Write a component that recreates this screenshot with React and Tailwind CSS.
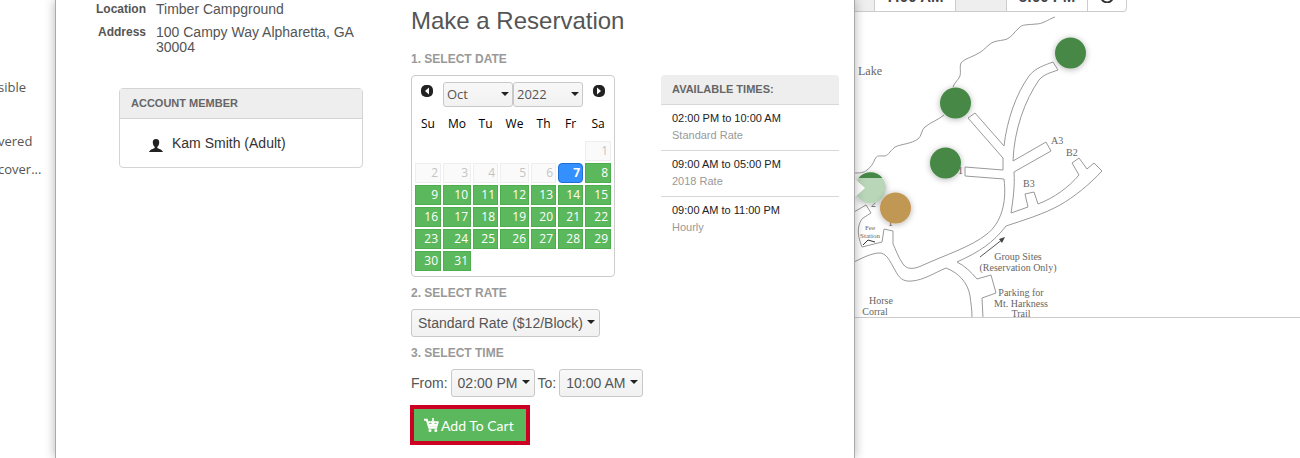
const weekdays = ['Su', 'Mo', 'Tu', 'We', 'Th', 'Fr', 'Sa'];
const weeks = [
  [null, null, null, null, null, null, 1],
  [2, 3, 4, 5, 6, 7, 8],
  [9, 10, 11, 12, 13, 14, 15],
  [16, 17, 18, 19, 20, 21, 22],
  [23, 24, 25, 26, 27, 28, 29],
  [30, 31, null, null, null, null, null],
];
const times = [
  ['02:00 PM to 10:00 AM', 'Standard Rate'],
  ['09:00 AM to 05:00 PM', '2018 Rate'],
  ['09:00 AM to 11:00 PM', 'Hourly'],
];

function Select({ id, label, value, className, arrow }) {
  return (
    <span className="relative inline-flex">
      <select
        id={id}
        aria-label={label}
        defaultValue={value}
        className={'appearance-none rounded-[3px] border border-[#c8c8c8] bg-linear-to-b from-[#f8f8f8] to-[#f1f1f1] text-[#555] ' + className}
      >
        <option>{value}</option>
      </select>
      <svg viewBox="0 0 8 4" className={'pointer-events-none absolute h-1 w-2 ' + arrow}>
        <path d="M0 0h8L4 4z" fill="#222" />
      </svg>
    </span>
  );
}

function ArrowButton({ label, d }) {
  return (
    <button type="button" aria-label={label} className="mt-[3px] h-3 w-3">
      <svg viewBox="0 0 12 12" className="h-3 w-3">
        <rect width="12" height="12" rx="5" fill="#222" />
        <path d={d} fill="#fff" />
      </svg>
    </button>
  );
}

function dayClass(day) {
  const base = 'block h-5 w-full border pr-[2px] text-right text-[12px] leading-[18px] ';
  if (day < 7) return base + 'border-[#eee] bg-[#fafafa] text-[#c4c4c4]';
  if (day === 7) return base + 'rounded-[4px] border-[#1f6fd0] bg-[#3490ff] font-bold text-white';
  return base + 'border-[#4cae4c] bg-[#5cb85c] text-white';
}

function Calendar() {
  return (
    <div className="w-[204px] rounded-[4px] border border-[#ccc] px-px pt-[6px] pb-[3px] font-['Open_Sans',sans-serif]">
      <div className="flex items-start justify-between px-2">
        <ArrowButton label="Previous month" d="M8 2.5v7L4 6z" />
        <div className="flex">
          <Select label="Month" value="Oct" className="h-[25px] w-[70px] pl-[3px] text-[13px]" arrow="top-[10px] right-[4px]" />
          <Select label="Year" value="2022" className="h-[25px] w-[70px] pl-[3px] text-[13px]" arrow="top-[10px] right-[4px]" />
        </div>
        <ArrowButton label="Next month" d="M4 2.5v7L8 6z" />
      </div>
      <table className="w-full table-fixed border-separate border-spacing-x-[2px] border-spacing-y-[2px]">
        <colgroup>
          <col className="w-[26px]" />
          <col className="w-[28px]" />
          <col className="w-[25px]" />
          <col className="w-[29px]" />
          <col className="w-[25px]" />
          <col className="w-[25px]" />
          <col className="w-[26px]" />
        </colgroup>
        <thead>
          <tr>
            {weekdays.map((d) => (
              <th key={d} className="h-[30px] p-0 text-center text-[12px] font-normal text-black">{d}</th>
            ))}
          </tr>
        </thead>
        <tbody>
          {weeks.map((week, i) => (
            <tr key={i}>
              {week.map((day, j) => (
                <td key={j} className="p-0">
                  {day && <button type="button" disabled={day < 7} className={dayClass(day)}>{day}</button>}
                </td>
              ))}
            </tr>
          ))}
        </tbody>
      </table>
    </div>
  );
}

function StepTitle({ children }) {
  return <h3 className="text-[12px] leading-4 font-bold text-[#999]">{children}</h3>;
}

function CartIcon() {
  return (
    <svg viewBox="0 0 15 14" className="h-[14px] w-[15px]" fill="none" stroke="#fff">
      <path d="M0 1.8h2.8l2.4 7.900h8" strokeWidth="2" />
      <path d="M4 4.200h2.600M4.600 6.600h8.600M14 3.400l-1.200 4.400H5M11.400 4.200H14.500" strokeWidth="1.8" />
      <path d="M9 0v5.600M6.800 3.400L9 5.800l2.300-2.400" strokeWidth="1.6" />
      <circle cx="6" cy="12.400" r="1.500" fill="#fff" stroke="none" />
      <circle cx="11.800" cy="12.400" r="1.500" fill="#fff" stroke="none" />
    </svg>
  );
}

function Dialog() {
  return (
    <main className="relative z-10 flex w-[800px] shrink-0 border-x border-[#aaa] bg-white pb-3 shadow-[0_0_10px_rgba(0,0,0,0.3)]">
      <section className="w-[307px] pt-[2px] pl-[38px]">
        <dl className="grid grid-cols-[52px_1fr] gap-x-[10px] gap-y-2 text-[14px] leading-[15px] text-[#555]">
          <dt className="text-right text-[12px] leading-[14px] font-bold">Location</dt>
          <dd>Timber Campground</dd>
          <dt className="text-right text-[12px] leading-[14px] font-bold">Address</dt>
          <dd className="pr-1">100 Campy Way Alpharetta, GA 30004</dd>
        </dl>
        <div className="mt-[33px] ml-[25px] rounded-[4px] border border-[#d4d4d4]">
          <h2 className="border-b border-[#d4d4d4] bg-[#eee] px-[11px] text-[11px] leading-[29px] font-bold text-[#666]">ACCOUNT MEMBER</h2>
          <p className="flex h-12 items-center gap-[9px] pl-[29px] text-[14px] text-[#333]">
            <svg viewBox="0 0 14 13" className="mt-1 h-[13px] w-[14px]" fill="#222">
              <path d="M7 0C4.600 0 3.600 1.400 3.800 3.700c.1 1.900.9 3.300 1.900 4.100v1.100C4.800 9.700.8 10.200 0 13h14c-.8-2.800-4.800-3.300-5.700-4.100V7.800c1-.8 1.800-2.200 1.900-4.100C10.400 1.400 9.400 0 7 0z" />
            </svg>
            Kam Smith (Adult)
          </p>
        </div>
      </section>

      <section className="ml-12 w-[250px] pt-[5px]">
        <h1 className="text-[24px] leading-8 text-[#555]">Make a Reservation</h1>
        <div className="mt-[14px]">
          <StepTitle>1. SELECT DATE</StepTitle>
        </div>
        <div className="mt-2">
          <Calendar />
        </div>
        <div className="mt-2">
          <StepTitle>2. SELECT RATE</StepTitle>
        </div>
        <div className="mt-2 flex">
          <Select label="Rate" value="Standard Rate ($12/Block)" className="h-7 w-[189px] pl-[6px] text-[14px]" arrow="top-[11px] right-[5px]" />
        </div>
        <div className="mt-2">
          <StepTitle>3. SELECT TIME</StepTitle>
        </div>
        <div className="mt-2 flex items-center gap-[3px] text-[14px] text-[#555]">
          <label htmlFor="from">From:</label>
          <Select id="from" value="02:00 PM" className="h-7 w-[84px] pl-[6px] text-[14px]" arrow="top-[11px] right-[5px]" />
          <label htmlFor="to">To:</label>
          <Select id="to" value="10:00 AM" className="h-7 w-[84px] pl-[6px] text-[14px]" arrow="top-[11px] right-[5px]" />
        </div>
        <button type="button" className="mt-2 -ml-px flex h-10 w-[120px] items-center gap-[2px] border-4 border-[#cc0022] bg-[#5cb85c] pl-[10px] font-['Lato',sans-serif] text-[14px] whitespace-nowrap text-white">
          <CartIcon />
          Add To Cart
        </button>
      </section>

      <section className="mt-[75px] w-[178px]">
        <h2 className="rounded-t-[4px] border-b border-[#d8d8d8] bg-[#eee] px-[11px] text-[11px] leading-[29px] font-bold text-[#666]">AVAILABLE TIMES:</h2>
        <ul className="divide-y divide-[#d8d8d8] text-[11px]">
          {times.map(([range, rate]) => (
            <li key={range} className="px-[11px] pt-[5px] pb-[6px] leading-[17px]">
              <p className="text-[#222]">{range}</p>
              <p className="text-[#999]">{rate}</p>
            </li>
          ))}
        </ul>
      </section>
    </main>
  );
}

function CampMap() {
  return (
    <svg viewBox="855 13 276 304" className="block h-[304px] w-[276px]" fill="none" stroke="#999" strokeWidth="1">
      <defs>
        <filter id="pin" x="-40%" y="-40%" width="180%" height="180%">
          <feDropShadow dx="0" dy="1" stdDeviation="3" floodOpacity="0.3" />
        </filter>
      </defs>
      <path d="M1055 17c-8 3-12 7-19 7-8 1-14 0-17 4-5 4-7 9-12 11s-12 1-17 5-8 8-13 10c-5 3-13 5-16 9-2 5 1 10-2 15-3 4-5 6-6 9" />
      <path d="M944 115c-6 5-13 7-19 12-4 3-3 9-7 12-7 5-17 5-23 8-6 5-7 9-11 9-5 0-7-1-9 3-2 5-4 8-8 11-3 3-8 3-13 3" />
      <path d="M1004 146c3-26 12-52 25-70 6-8 16-11 24-14l5 8c-8 3-14 4-19 10-14 20-25 50-26 81l33-19 5 9-37 21c1 14-1 28-3 41l17-6-3-13 9-2 4 12c16-6 31-17 41-29l-7-12 7-5 8 11 7-6 8 8c-13 14-28 26-42 34-16 9-36 15-54 21-13 17-27 26-49 36 8 4 14 10 20 17l14-4 5 18-14 5 1 20" />
      <path d="M1004 146l-29-33-7 5 35 40v12l-38-3v9l39 3c3 24-3 44-17 55-16 13-42 21-66 32-7 3-14 4-18-2-5-7-7-14-10-20v-13l-9-2-2 13-20 5c-6-14-4-24 1-29l8-5-5-8-12 7M854 262c8-4 16-8 24-9 9-1 12 9 17 17 4 8 8 12 17 11 12-1 22-8 34-13 13 5 22 15 24 28 1 8 2 14 2 21" />
      <path d="M980 257l23-18" stroke="#555" />
      <path d="M1005 237l-6 2 3 4z" fill="#444" stroke="none" />
      <path d="M863 245l5-5 7 2" stroke="#333" />
      <g fill="#666" stroke="none" fontFamily="Liberation Serif, serif" fontSize="10">
        <text x="858" y="75" fontSize="12">Lake</text>
        <text x="1051" y="144">A3</text>
        <text x="1066" y="156">B2</text>
        <text x="1023" y="187">B3</text>
        <text x="958" y="174">1</text>
        <text x="871" y="207">2</text>
        <text x="888" y="226">1</text>
        <text x="870" y="230" fontSize="7" textAnchor="middle">Fee</text>
        <text x="870" y="238" fontSize="7" textAnchor="middle">Station</text>
        <text x="1018" y="260" textAnchor="middle">Group Sites</text>
        <text x="1018" y="271" textAnchor="middle">(Reservation Only)</text>
        <text x="1021" y="296" textAnchor="middle">Parking for</text>
        <text x="1021" y="307" textAnchor="middle">Mt. Harkness</text>
        <text x="1021" y="317" textAnchor="middle">Trail</text>
        <text x="881" y="304" textAnchor="middle">Horse</text>
        <text x="875" y="315" textAnchor="middle">Corral</text>
      </g>
      <g stroke="none" fill="#468847">
        <circle cx="1070.500" cy="53" r="15.500" filter="url(#pin)" />
        <circle cx="955.500" cy="103" r="15.500" filter="url(#pin)" />
        <circle cx="945.500" cy="163" r="15.500" filter="url(#pin)" />
        <circle cx="870.500" cy="188" r="15.500" fill="#b9d6b9" filter="url(#pin)" />
        <path d="M858.500 178a15.500 15.500 0 0 1 24 0z" />
        <circle cx="895.500" cy="208" r="15.500" fill="#c09853" filter="url(#pin)" />
      </g>
      <path d="M854 178l11 10-11 10z" fill="#fff" stroke="none" />
    </svg>
  );
}

function Toolbar() {
  const cell = 'flex items-end border-r border-[#ccc] ';
  return (
    <div className="flex h-3 w-[272px] overflow-hidden rounded-br-[4px] border-b border-[#ccc] text-[15px] leading-4 font-bold text-[#444]">
      <span className={cell + 'w-5 bg-[#eee]'} />
      <span className={cell + 'w-[81px] justify-center pb-[6px]'}>7:00 AM</span>
      <span className={cell + 'w-[51px] bg-[#eee]'} />
      <span className={cell + 'w-[81px] justify-center pb-[6px]'}>5:00 PM</span>
      <button type="button" aria-label="Refresh" className={cell + 'grow justify-center rounded-br-[4px] pb-2'}>
        <svg viewBox="0 0 14 14" className="h-[14px] w-[14px]" fill="none" stroke="#333" strokeWidth="2">
          <path d="M12 4a6 6 0 1 0 1 4M13 1v4H9" />
        </svg>
      </button>
    </div>
  );
}

export default function App() {
  return (
    <div className="flex min-h-screen overflow-hidden bg-white font-['Liberation_Sans',Arial,sans-serif]">
      <aside className="w-[55px] shrink-0 -indent-[2px] pt-[78px] font-['Open_Sans',sans-serif] text-[13px] leading-[18px] text-[#555]">
        <p>sible</p>
        <p className="mt-9">vered</p>
        <p className="mt-[10px]">cover...</p>
      </aside>
      <Dialog />
      <div className="min-w-0 grow">
        <Toolbar />
        <div className="border-b border-[#ccc] pt-px">
          <CampMap />
        </div>
      </div>
    </div>
  );
}
